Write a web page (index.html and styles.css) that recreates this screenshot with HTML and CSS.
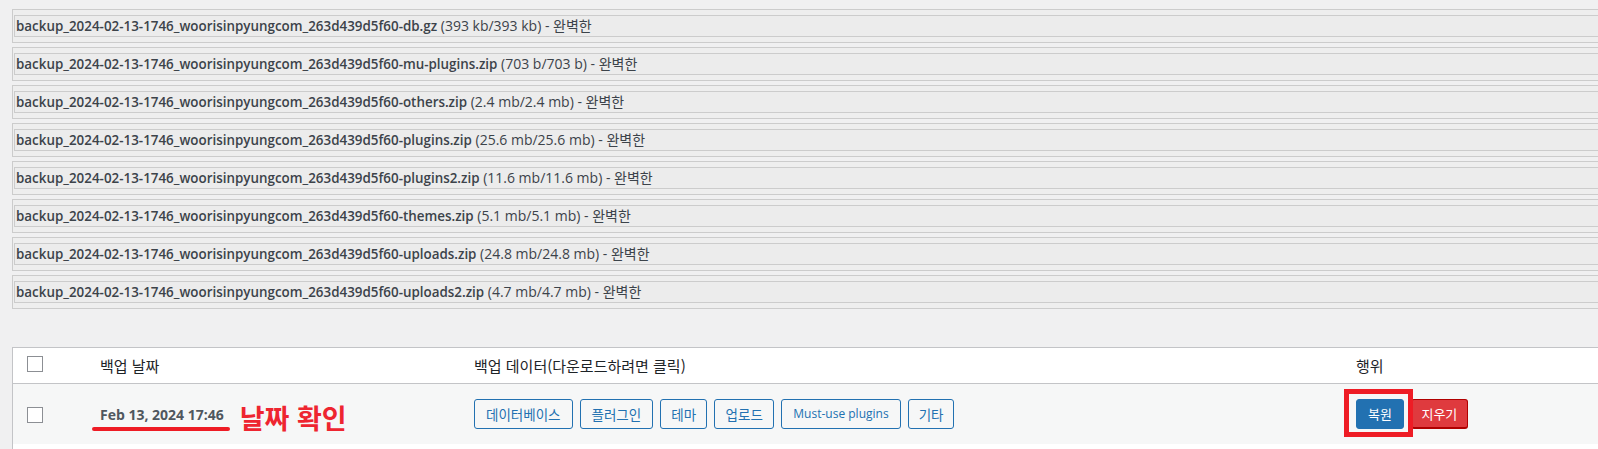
FILE: index.html
```html
<!DOCTYPE html>
<html lang="ko">
<head>
<meta charset="utf-8">
<title>UpdraftPlus backups</title>
<link rel="stylesheet" href="styles.css">
</head>
<body>
<div class="page">
  <div class="files">
    <div class="file"><div class="file-inner"><b>backup_2024-02-13-1746_woorisinpyungcom_263d439d5f60-db.gz</b> (393 kb/393 kb) - 완벽한</div></div>
    <div class="file"><div class="file-inner"><b>backup_2024-02-13-1746_woorisinpyungcom_263d439d5f60-mu-plugins.zip</b> (703 b/703 b) - 완벽한</div></div>
    <div class="file"><div class="file-inner"><b>backup_2024-02-13-1746_woorisinpyungcom_263d439d5f60-others.zip</b> (2.4 mb/2.4 mb) - 완벽한</div></div>
    <div class="file"><div class="file-inner"><b>backup_2024-02-13-1746_woorisinpyungcom_263d439d5f60-plugins.zip</b> (25.6 mb/25.6 mb) - 완벽한</div></div>
    <div class="file"><div class="file-inner"><b>backup_2024-02-13-1746_woorisinpyungcom_263d439d5f60-plugins2.zip</b> (11.6 mb/11.6 mb) - 완벽한</div></div>
    <div class="file"><div class="file-inner"><b>backup_2024-02-13-1746_woorisinpyungcom_263d439d5f60-themes.zip</b> (5.1 mb/5.1 mb) - 완벽한</div></div>
    <div class="file"><div class="file-inner"><b>backup_2024-02-13-1746_woorisinpyungcom_263d439d5f60-uploads.zip</b> (24.8 mb/24.8 mb) - 완벽한</div></div>
    <div class="file"><div class="file-inner"><b>backup_2024-02-13-1746_woorisinpyungcom_263d439d5f60-uploads2.zip</b> (4.7 mb/4.7 mb) - 완벽한</div></div>
  </div>

  <div class="table">
    <div class="row head">
      <div class="cell check"><span class="cb"></span></div>
      <div class="cell date">백업 날짜</div>
      <div class="cell data">백업 데이터(다운로드하려면 클릭)</div>
      <div class="cell actions">행위</div>
    </div>
    <div class="row body">
      <div class="cell check"><span class="cb"></span></div>
      <div class="cell date">
        <span class="date-text">Feb 13, 2024 17:46<span class="underline"></span></span>
        <span class="note">날짜 확인</span>
      </div>
      <div class="cell data">
        <div class="btns">
          <span class="btn">데이터베이스</span>
          <span class="btn">플러그인</span>
          <span class="btn narrow">테마</span>
          <span class="btn mid">업로드</span>
          <span class="btn latin">Must-use plugins</span>
          <span class="btn narrow">기타</span>
        </div>
      </div>
      <div class="cell actions">
        <div class="act-btns">
          <span class="restore-wrap"><span class="btn primary">복원</span><span class="highlight"></span></span>
          <span class="btn delete">지우기</span>
        </div>
      </div>
    </div>
    <div class="row tail"></div>
  </div>
</div>
</body>
</html>
```

FILE: styles.css
```css
html, body {
  margin: 0;
  padding: 0;
  overflow: hidden;
  background: #f0f0f1;
}

body {
  font-family: "Open Sans", "Noto Sans CJK KR", sans-serif;
  color: #3c434a;
  font-size: 14px;
}

.page {
  width: 1640px;
  padding: 9px 0 0 12px;
}

.files {
  display: flex;
  flex-direction: column;
  gap: 4px;
}

.file {
  border: 1px solid #cccccc;
  background: #eeeeee;
  padding: 5px 1px;
}

.file-inner {
  border: 1px solid #cccccc;
  background: #ececec;
  padding: 0 1px;
  line-height: 20px;
  height: 20px;
  white-space: nowrap;
  color: #3c434a;
}

.file-inner b {
  font-weight: 600;
  font-size: 13.4px;
}

.table {
  margin-top: 38px;
  border: 1px solid #c3c4c7;
  background: #ffffff;
}

.row {
  display: grid;
  grid-template-columns: 77px 374px 882px 1fr;
  align-items: center;
}

.row.head {
  height: 35px;
  border-bottom: 1px solid #c3c4c7;
  font-family: "Noto Sans CJK KR", sans-serif;
  font-size: 15px;
  color: #1d2327;
}

.row.body {
  height: 60px;
  background: #f6f7f7;
}

.row.tail {
  height: 5px;
  background: #ffffff;
}

.cell {
  padding-left: 10px;
}

.cell.check {
  padding-left: 14px;
  display: flex;
  align-items: center;
}

.cb {
  display: block;
  width: 14px;
  height: 14px;
  border: 1px solid #8c8f94;
  background: #ffffff;
}

.row.head .cb {
  margin-bottom: 3px;
}

.row.body .cb {
  margin-top: 2px;
}

.row.body .cell.date {
  display: flex;
  align-items: center;
  gap: 16px;
}

.date-text {
  position: relative;
  font-weight: 700;
  font-size: 14px;
  color: #50575e;
}

.underline {
  position: absolute;
  left: -8px;
  right: -6px;
  top: 22px;
  height: 4px;
  border-radius: 2px;
  background: #ee1c25;
}

.note {
  font-family: "Noto Sans CJK KR", sans-serif;
  font-weight: 700;
  font-size: 27px;
  color: #ee2530;
  line-height: 1;
  padding-top: 7px;
}

.btns, .act-btns {
  display: flex;
  align-items: center;
  gap: 7px;
}

.btn {
  display: inline-block;
  box-sizing: border-box;
  height: 30px;
  line-height: 28px;
  padding: 0 11px;
  border: 1px solid #2271b1;
  border-radius: 3px;
  background: #f6f7f7;
  color: #2271b1;
  font-family: "Noto Sans CJK KR", sans-serif;
  font-size: 13.5px;
  white-space: nowrap;
}

.btn.narrow {
  padding: 0 10px;
}

.btn.mid {
  padding: 0 10.5px;
}

.btn.latin {
  font-family: "Open Sans", sans-serif;
  font-size: 12px;
}

.restore-wrap {
  position: relative;
  display: inline-block;
}

.btn.primary {
  background: #2271b1;
  color: #ffffff;
  padding: 0 11px;
  font-size: 13px;
}

.highlight {
  position: absolute;
  left: -12px;
  top: -10px;
  width: 59px;
  height: 38px;
  border: 5px solid #ee1c25;
  pointer-events: none;
}

.btn.delete {
  background: #df3a3e;
  border: 1px solid #b00000;
  border-bottom-width: 2px;
  color: #ffffff;
  line-height: 27px;
  font-size: 13px;
  padding: 0 9.5px;
}
```
